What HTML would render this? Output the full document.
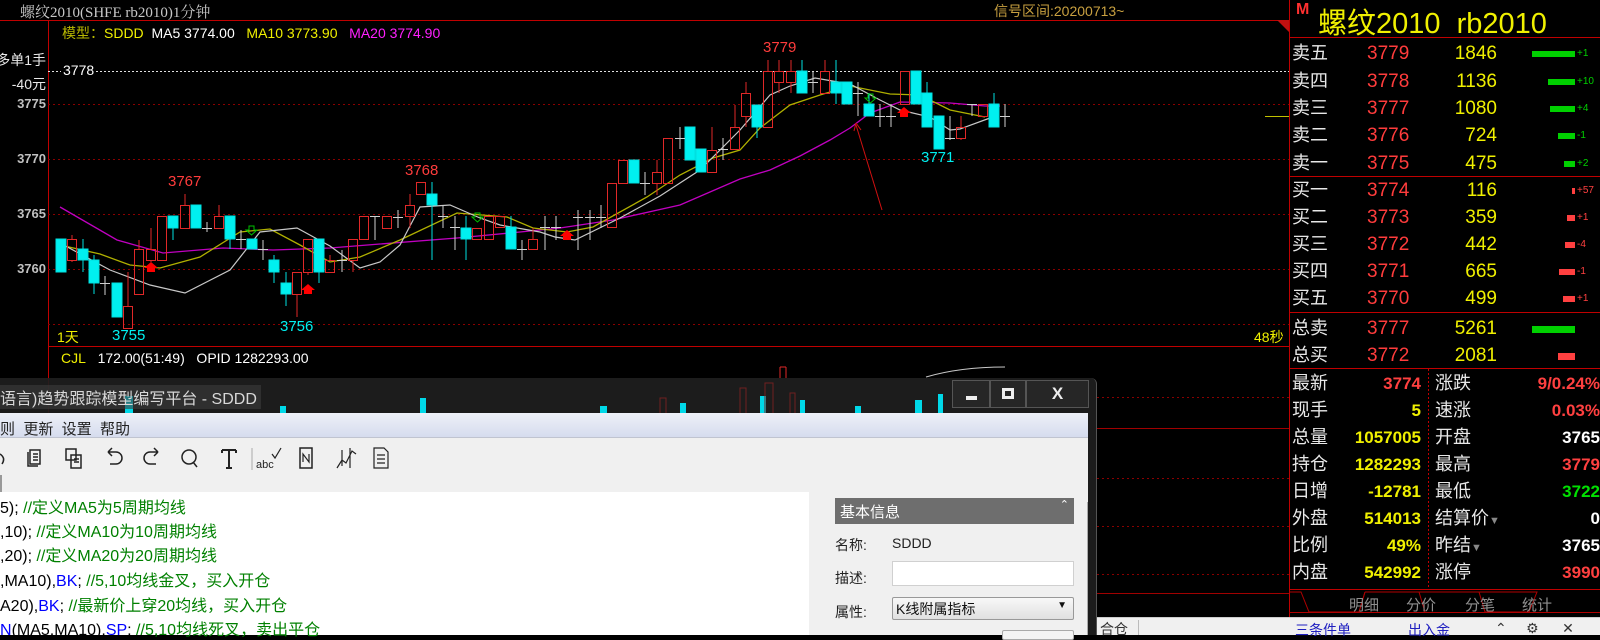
<!DOCTYPE html>
<html><head><meta charset="utf-8"><style>
*{margin:0;padding:0;box-sizing:border-box}
body{width:1600px;height:635px;background:#000;overflow:hidden;position:relative;font-family:"Liberation Sans","Noto Sans CJK SC",sans-serif}
.a{position:absolute;white-space:nowrap}
.ob{position:absolute;left:1289px;width:311px;font-size:18px}
.r{position:absolute;height:27px;width:311px;line-height:27px}
.r .l{position:absolute;left:3px;top:0;color:#e8e8e8;font-size:18px}
.r .p{position:absolute;left:78px;top:0;color:#ff3c3c;font-size:19px}
.r .q{position:absolute;right:103px;top:0;color:#f0f000;font-size:19px}
.r .b{position:absolute;top:11px;height:6px}
.r .d{position:absolute;left:288px;top:0;font-size:10px}
.st{position:absolute;left:1289px;width:311px;height:27px;font-size:17px;font-weight:bold;line-height:27px}
.st .l{position:absolute;left:3px;color:#e8e8e8;font-weight:normal;font-size:18px}
.st .v{position:absolute;right:179px}
.st .l2{position:absolute;left:146px;color:#e8e8e8;font-weight:normal;font-size:18px}
.st .v2{position:absolute;right:0}
.code{position:absolute;left:0;font-size:16px;color:#000;font-family:"Liberation Sans","Noto Sans CJK SC",sans-serif}
.g{color:#008000}.bl{color:#0000ff}
</style></head><body>

<div class="a" style="left:20px;top:1px;color:#c8c8c8;font-size:15px;font-family:'Liberation Serif','Noto Serif CJK SC',serif">螺纹2010(SHFE rb2010)1分钟</div>
<div class="a" style="left:994px;top:1px;color:#c8a040;font-size:14px">信号区间:20200713~</div>

<svg class="a" style="left:0;top:0" width="1600" height="635">
<line x1="0" y1="20.5" x2="1289" y2="20.5" stroke="#c00000"/>
<line x1="48.5" y1="20" x2="48.5" y2="620" stroke="#c00000"/>
<polygon points="1277,20 1289,20 1289,32" fill="#c01010"/>
<line x1="1289.5" y1="0" x2="1289.5" y2="617" stroke="#c00000"/>
<g stroke="#8a0000" stroke-dasharray="2,3">
<line x1="48" y1="104.5" x2="1289" y2="104.5"/><line x1="48" y1="159.5" x2="1289" y2="159.5"/>
<line x1="48" y1="214.5" x2="1289" y2="214.5"/><line x1="48" y1="269.5" x2="1289" y2="269.5"/>
<line x1="48" y1="324.5" x2="1289" y2="324.5"/>
<line x1="1097" y1="397.5" x2="1289" y2="397.5"/><line x1="1097" y1="478.5" x2="1289" y2="478.5"/>
<line x1="1097" y1="526.5" x2="1289" y2="526.5"/><line x1="1097" y1="574.5" x2="1289" y2="574.5"/>
</g>
<line x1="48" y1="71.5" x2="1289" y2="71.5" stroke="#e0e0e0" stroke-dasharray="2,2"/>
<line x1="48" y1="346.5" x2="1289" y2="346.5" stroke="#c00000"/>
<line x1="1097" y1="428.5" x2="1289" y2="428.5" stroke="#a00000"/>
<line x1="1097" y1="593.5" x2="1289" y2="593.5" stroke="#a00000"/>
<line x1="1265" y1="116.5" x2="1289" y2="116.5" stroke="#c0c000"/>

<polyline fill="none" stroke="#c000c0" stroke-width="1.3" points="60,207 117,240 163,253 223,248 273,250 330,248 380,244 457,238 520,232 560,228 613,220 680,205 740,179 770,170 800,156 830,140 850,128 870,113 900,102 950,103 985,106 1000,106"/>
<polyline fill="none" stroke="#b0b000" stroke-width="1.3" points="60,245 100,254 130,265 160,268 200,257 240,232 270,229 300,245 330,262 360,257 400,240 457,213 507,217 533,228 567,232 593,227 647,197 680,175 713,158 740,150 760,128 790,105 820,95 850,86 890,94 920,95 950,110 985,117"/>
<polyline fill="none" stroke="#c8c8c8" stroke-width="1.2" points="60,243 110,270 150,285 185,293 230,270 260,232 297,228 330,246 360,268 380,262 400,245 420,207 450,205 480,218 500,225 540,232 555,237 575,240 620,218 660,196 700,170 740,130 770,95 790,86 815,78 850,84 880,100 900,110 930,117 950,130 960,129 990,118"/>

<g stroke-width="1">
<g fill="#00f0f0" stroke="#00e0e0">
<path d="M61,239V272M83,239V272M94,255V294M117,283V317M173,216V240M196,205V228M230,216V249M252,239V249M274,255V283M286,272V306M319,239V283M432,182V260M466,216V260M511,216V249M634,160V183M690,127V160M701,149V172M757,105V138M802,60V93M836,60V104M847,82V104M869,93V116M916,71V104M927,82V127M939,116V149M994,93V127"/>
<rect x="56" y="239" width="10" height="33"/><rect x="78" y="249" width="10" height="11"/><rect x="89" y="260" width="10" height="23"/>
<rect x="112" y="283" width="10" height="34"/><rect x="168" y="216" width="10" height="12"/><rect x="191" y="205" width="10" height="23"/>
<rect x="225" y="216" width="10" height="23"/><rect x="247" y="239" width="10" height="10"/><rect x="269" y="260" width="10" height="12"/>
<rect x="281" y="283" width="10" height="11"/><rect x="314" y="239" width="10" height="33"/><rect x="427" y="194" width="10" height="11"/>
<rect x="461" y="228" width="10" height="11"/><rect x="506" y="227" width="10" height="22"/><rect x="629" y="160" width="10" height="23"/>
<rect x="685" y="127" width="10" height="33"/><rect x="696" y="149" width="10" height="23"/><rect x="752" y="105" width="10" height="22"/>
<rect x="797" y="71" width="10" height="22"/><rect x="831" y="82" width="10" height="11"/><rect x="842" y="82" width="10" height="22"/>
<rect x="864" y="104" width="10" height="12"/><rect x="911" y="71" width="10" height="33"/><rect x="922" y="93" width="10" height="34"/>
<rect x="934" y="116" width="10" height="33"/><rect x="989" y="104" width="10" height="23"/>
</g>
<g fill="none" stroke="#e02828">
<path d="M72,235V239M72,260V262M128,272V306M139,240V249M151,228V249M151,260V262M185,194V205M219,205V216M297,294V317M308,272V275M330,255V260M353,260V272M410,194V205M410,216V228M533,228V239M657,160V172M657,183V195M712,127V150M735,105V127M746,82V93M746,116V127M768,60V71M779,60V71M779,82V93M791,60V71M791,82V93M825,60V71M961,116V127M961,138V140"/>
<rect x="67.5" y="239.5" width="9" height="21"/><rect x="123.5" y="306.5" width="9" height="22"/><rect x="134.5" y="249.5" width="9" height="45"/>
<rect x="146.5" y="249.5" width="9" height="11"/><rect x="157.5" y="216.5" width="9" height="44"/><rect x="180.5" y="205.5" width="9" height="23"/>
<rect x="214.5" y="216.5" width="9" height="12"/><rect x="292.5" y="272.5" width="9" height="22"/><rect x="303.5" y="239.5" width="9" height="33"/>
<rect x="325.5" y="260.5" width="9" height="12"/><rect x="348.5" y="239.5" width="9" height="21"/><rect x="359.5" y="216.5" width="9" height="23"/>
<rect x="382.5" y="216.5" width="9" height="12"/><rect x="405.5" y="205.5" width="9" height="11"/><rect x="416.5" y="182.5" width="9" height="12"/>
<rect x="472.5" y="228.5" width="9" height="11"/><rect x="484.5" y="216.5" width="9" height="23"/><rect x="495.5" y="216.5" width="9" height="11"/>
<rect x="528.5" y="239.5" width="9" height="10"/><rect x="607.5" y="183.5" width="9" height="44"/><rect x="618.5" y="160.5" width="9" height="23"/>
<rect x="652.5" y="172.5" width="9" height="11"/><rect x="663.5" y="138.5" width="9" height="45"/><rect x="707.5" y="150.5" width="9" height="22"/>
<rect x="730.5" y="127.5" width="9" height="22"/><rect x="741.5" y="93.5" width="9" height="23"/><rect x="763.5" y="71.5" width="9" height="56"/>
<rect x="774.5" y="71.5" width="9" height="11"/><rect x="786.5" y="71.5" width="9" height="11"/><rect x="820.5" y="71.5" width="9" height="22"/>
<rect x="900.5" y="71.5" width="9" height="33"/><rect x="956.5" y="127.5" width="9" height="11"/><rect x="978.5" y="104.5" width="9" height="12"/>
</g>
<g stroke="#d0d0d0">
<path d="M100,283.5H110M105,276V295M202,228.5H212M207,222V232M236,239.5H246M241,230V249M258,249.5H268M263,240V260M337,260.5H347M342,250V272M370,216.5H380M375,216V240M393,217.5H403M398,210V228M438,216.5H448M443,205V228M450,227.5H460M455,216V250M517,249.5H527M522,240V260M540,227.5H550M545,216V250M551,227.5H561M556,216V240M573,217.5H583M578,210V250M585,217.5H595M590,210V240M596,217.5H606M601,205V228M640,183.5H650M645,172V195M675,138.5H685M680,127V149M718,149.5H728M723,138V160M808,82.5H818M813,71V93M853,93.5H863M858,82V116M875,116.5H885M880,104V127M886,116.5H896M891,104V127M945,138.5H955M950,116V140M967,104.5H977M972,104V116M1000,116.5H1010M1005,104V127"/>
</g>
</g>
<g fill="#ff0000"><path d="M147,272h8v-4h3l-7,-6l-7,6h3z"/><path d="M304,294h8v-4h3l-7,-6l-7,6h3z"/><path d="M563,240h8v-4h3l-7,-6l-7,6h3z"/><path d="M900,117h8v-4h3l-7,-6l-7,6h3z"/></g>
<g fill="none" stroke="#00c000"><path d="M249,226h5v4h3l-5.5,5l-5.5,-5h3z"/><path d="M475,213h5v4h3l-5.5,5l-5.5,-5h3z"/><path d="M868,94h5v4h3l-5.5,5l-5.5,-5h3z"/></g>
<line x1="882" y1="210" x2="856" y2="125" stroke="#d01010"/><path d="M856,123l-2,8M856,123l5,7" stroke="#d01010" fill="none"/>
<line x1="780" y1="367" x2="780" y2="378" stroke="#e02828"/><line x1="786" y1="367" x2="786" y2="378" stroke="#e02828"/><line x1="780" y1="367" x2="786" y2="367" stroke="#e02828"/>
<path d="M926,377 Q960,367 1005,367" stroke="#c8c8c8" fill="none"/>
</svg>

<div class="a" style="left:62px;top:23px;font-size:14px"><span style="color:#b8b800">模型：</span><span style="color:#f0f000">SDDD</span>&nbsp;&nbsp;<span style="color:#fff">MA5 3774.00</span>&nbsp;&nbsp;&nbsp;<span style="color:#f0f000">MA10 3773.90</span>&nbsp;&nbsp;&nbsp;<span style="color:#ff20ff">MA20 3774.90</span></div>
<div class="a" style="right:1554px;top:50px;color:#e8e8e8;font-size:14px">多单1手</div>
<div class="a" style="right:1554px;top:74px;color:#e8e8e8;font-size:14px">-40元</div>
<div class="a" style="left:61px;top:62px;color:#fff;font-size:14px;background:#000;padding:0 2px">3778</div>
<div class="a" style="right:1554px;top:96px;color:#c0c0c0;font-size:13px;font-weight:bold">3775</div>
<div class="a" style="right:1554px;top:151px;color:#c0c0c0;font-size:13px;font-weight:bold">3770</div>
<div class="a" style="right:1554px;top:206px;color:#c0c0c0;font-size:13px;font-weight:bold">3765</div>
<div class="a" style="right:1554px;top:261px;color:#c0c0c0;font-size:13px;font-weight:bold">3760</div>
<div class="a" style="left:763px;top:39px;color:#ff3c3c;font-size:15px">3779</div>
<div class="a" style="left:921px;top:149px;color:#00f0f0;font-size:15px">3771</div>
<div class="a" style="left:168px;top:173px;color:#ff3c3c;font-size:15px">3767</div>
<div class="a" style="left:405px;top:162px;color:#ff3c3c;font-size:15px">3768</div>
<div class="a" style="left:112px;top:327px;color:#00f0f0;font-size:15px">3755</div>
<div class="a" style="left:280px;top:318px;color:#00f0f0;font-size:15px">3756</div>
<div class="a" style="left:57px;top:327px;color:#f0f000;font-size:14px">1天</div>
<div class="a" style="left:1254px;top:327px;color:#f0f000;font-size:14px">48秒</div>
<div class="a" style="left:61px;top:350px;font-size:14px"><span style="color:#f0f000">CJL</span>&nbsp;&nbsp;&nbsp;<span style="color:#fff">172.00(51:49)&nbsp;&nbsp;&nbsp;OPID 1282293.00</span></div>

<div class="a" style="left:1296px;top:1px;color:#ff3030;font-size:16px;font-weight:bold">M</div>
<div class="a" style="left:1318px;top:0px;color:#f0f000;font-size:29px">螺纹2010&nbsp;&nbsp;rb2010</div>
<svg class="a" style="left:1289px;top:0" width="311" height="635">
<g stroke="#c00000"><line x1="0" y1="37.5" x2="311" y2="37.5"/><line x1="0" y1="176.5" x2="311" y2="176.5"/><line x1="0" y1="312.5" x2="311" y2="312.5"/><line x1="0" y1="368.5" x2="311" y2="368.5"/><line x1="0" y1="589.5" x2="311" y2="589.5"/></g>
<line x1="139.5" y1="369" x2="139.5" y2="589" stroke="#c00000" stroke-dasharray="2,2"/>
<g fill="none" stroke="#b00000"><path d="M0,592 L12,592 L20,612 L70,612 L76,592"/><path d="M76,592 L70,612 M76,592 L130,592 L136,612 M130,592 L190,592 L196,612 M190,592 L248,592 L240,612 L196,612"/><line x1="0" y1="612.5" x2="311" y2="612.5"/></g>
</svg>
<div class="ob" style="top:40px">
<div class="r" style="top:0"><span class="l">卖五</span><span class="p">3779</span><span class="q">1846</span><span class="b" style="left:243px;width:43px;background:#00d000"></span><span class="d" style="color:#00d000">+1</span></div>
<div class="r" style="top:28px"><span class="l">卖四</span><span class="p">3778</span><span class="q">1136</span><span class="b" style="left:259px;width:27px;background:#00d000"></span><span class="d" style="color:#00d000">+10</span></div>
<div class="r" style="top:55px"><span class="l">卖三</span><span class="p">3777</span><span class="q">1080</span><span class="b" style="left:261px;width:25px;background:#00d000"></span><span class="d" style="color:#00d000">+4</span></div>
<div class="r" style="top:82px"><span class="l">卖二</span><span class="p">3776</span><span class="q">724</span><span class="b" style="left:269px;width:17px;background:#00d000"></span><span class="d" style="color:#00d000">-1</span></div>
<div class="r" style="top:110px"><span class="l">卖一</span><span class="p">3775</span><span class="q">475</span><span class="b" style="left:275px;width:11px;background:#00d000"></span><span class="d" style="color:#00d000">+2</span></div>
<div class="r" style="top:137px"><span class="l">买一</span><span class="p">3774</span><span class="q">116</span><span class="b" style="left:283px;width:3px;background:#ff4040"></span><span class="d" style="color:#ff4040">+57</span></div>
<div class="r" style="top:164px"><span class="l">买二</span><span class="p">3773</span><span class="q">359</span><span class="b" style="left:278px;width:8px;background:#ff4040"></span><span class="d" style="color:#ff4040">+1</span></div>
<div class="r" style="top:191px"><span class="l">买三</span><span class="p">3772</span><span class="q">442</span><span class="b" style="left:276px;width:10px;background:#ff4040"></span><span class="d" style="color:#ff4040">-4</span></div>
<div class="r" style="top:218px"><span class="l">买四</span><span class="p">3771</span><span class="q">665</span><span class="b" style="left:270px;width:16px;background:#ff4040"></span><span class="d" style="color:#ff4040">-1</span></div>
<div class="r" style="top:245px"><span class="l">买五</span><span class="p">3770</span><span class="q">499</span><span class="b" style="left:274px;width:12px;background:#ff4040"></span><span class="d" style="color:#ff4040">+1</span></div>
<div class="r" style="top:275px"><span class="l">总卖</span><span class="p">3777</span><span class="q">5261</span><span class="b" style="left:243px;width:43px;height:7px;background:#00d000"></span></div>
<div class="r" style="top:302px"><span class="l">总买</span><span class="p">3772</span><span class="q">2081</span><span class="b" style="left:269px;width:17px;height:7px;background:#ff4040"></span></div>
</div>
<div class="st" style="top:370px"><span class="l">最新</span><span class="v" style="color:#ff4040">3774</span><span class="l2">涨跌</span><span class="v2" style="color:#ff4040">9/0.24%</span></div>
<div class="st" style="top:397px"><span class="l">现手</span><span class="v" style="color:#f0f000">5</span><span class="l2">速涨</span><span class="v2" style="color:#ff4040">0.03%</span></div>
<div class="st" style="top:424px"><span class="l">总量</span><span class="v" style="color:#f0f000">1057005</span><span class="l2">开盘</span><span class="v2" style="color:#fff">3765</span></div>
<div class="st" style="top:451px"><span class="l">持仓</span><span class="v" style="color:#f0f000">1282293</span><span class="l2">最高</span><span class="v2" style="color:#ff4040">3779</span></div>
<div class="st" style="top:478px"><span class="l">日增</span><span class="v" style="color:#f0f000">-12781</span><span class="l2">最低</span><span class="v2" style="color:#00e000">3722</span></div>
<div class="st" style="top:505px"><span class="l">外盘</span><span class="v" style="color:#f0f000">514013</span><span class="l2">结算价<span style="color:#888;font-size:11px">▼</span></span><span class="v2" style="color:#fff">0</span></div>
<div class="st" style="top:532px"><span class="l">比例</span><span class="v" style="color:#f0f000">49%</span><span class="l2">昨结<span style="color:#888;font-size:11px">▼</span></span><span class="v2" style="color:#fff">3765</span></div>
<div class="st" style="top:559px"><span class="l">内盘</span><span class="v" style="color:#f0f000">542992</span><span class="l2">涨停</span><span class="v2" style="color:#ff4040">3990</span></div>
<div class="a" style="left:1349px;top:594px;color:#909090;font-size:15px">明细</div>
<div class="a" style="left:1406px;top:594px;color:#909090;font-size:15px">分价</div>
<div class="a" style="left:1465px;top:594px;color:#909090;font-size:15px">分笔</div>
<div class="a" style="left:1522px;top:594px;color:#909090;font-size:15px">统计</div>

<div class="a" style="left:1097px;top:617px;width:503px;height:18px;background:#f0f0f0;border-top:1px solid #ccc"></div>
<div class="a" style="left:1138px;top:620px;width:1px;height:15px;background:#bbb"></div>
<div class="a" style="left:1100px;top:619px;color:#333;font-size:14px">合仓</div>
<div class="a" style="left:1295px;top:620px;color:#2020c0;font-size:14px">三条件单</div>
<div class="a" style="left:1408px;top:620px;color:#2020c0;font-size:14px">出入金</div>
<div class="a" style="left:1495px;top:620px;color:#333;font-size:14px">⌃&nbsp;&nbsp;&nbsp;&nbsp;&nbsp;⚙&nbsp;&nbsp;&nbsp;&nbsp;&nbsp;&nbsp;✕</div>

<div class="a" style="left:0;top:378px;width:1097px;height:257px;background:rgba(30,30,30,0.92);border-right:1px solid #555;border-top-right-radius:6px"></div>
<svg class="a" style="left:0;top:378px" width="1090" height="35">
<g fill="#00d8e8"><rect x="125" y="18" width="8" height="17"/><rect x="280" y="28" width="6" height="7"/><rect x="420" y="20" width="6" height="15"/><rect x="600" y="28" width="7" height="7"/><rect x="680" y="25" width="6" height="10"/><rect x="760" y="18" width="6" height="17"/><rect x="800" y="22" width="5" height="13"/><rect x="855" y="28" width="6" height="7"/><rect x="915" y="22" width="7" height="13"/><rect x="938" y="16" width="5" height="19"/></g>
<g fill="none" stroke="#702020"><path d="M740,35V10h6V35M765,35V5h8V35M790,35V15h5V35M660,35V20h6V35"/></g>
</svg>
<div class="a" style="left:0;top:385px;color:#d8d8d8;font-size:16px;background:rgba(60,60,60,0.6);padding:0 4px 0 0">语言)趋势跟踪模型编写平台 - SDDD</div>
<div class="a" style="left:952px;top:380px;width:38px;height:28px;background:#262626;border:1px solid #555"><div style="position:absolute;left:13px;top:15px;width:11px;height:4px;background:#eee"></div></div>
<div class="a" style="left:990px;top:380px;width:36px;height:28px;background:#262626;border:1px solid #555"><div style="position:absolute;left:11px;top:7px;width:12px;height:11px;border:3px solid #eee"></div></div>
<div class="a" style="left:1026px;top:380px;width:63px;height:28px;background:#262626;border:1px solid #555;color:#eee;font-size:17px;font-weight:bold;text-align:center;line-height:26px">X</div>
<div class="a" style="left:0;top:413px;width:1088px;height:25px;background:linear-gradient(#eef0f8,#d6dcee);border-bottom:1px solid #c0c4d0"></div>
<div class="a" style="left:0;top:418px;color:#222;font-size:15px">则 &nbsp;更新 &nbsp;设置 &nbsp;帮助</div>
<div class="a" style="left:0;top:438px;width:1088px;height:54px;background:#f0f0f0"></div>
<svg class="a" style="left:0;top:446px" width="400" height="26" fill="none" stroke="#222" stroke-width="1.5">
<path d="M0,8 Q6,12 2,18"/>
<rect x="30" y="4" width="10" height="14"/><path d="M33,8h5M33,11h5M33,14h5"/><path d="M28,6v14h10"/>
<rect x="66" y="3" width="10" height="11"/><rect x="71" y="9" width="10" height="13"/><path d="M74,13h5M74,16h5"/>
<path d="M108,6h8a6,6 0 0 1 0,12h-6M108,6l4,-4M108,6l4,4"/>
<path d="M158,6h-8a6,6 0 0 0 0,12h6M158,6l-4,-4M158,6l-4,4"/>
<circle cx="189" cy="11" r="7"/><path d="M193,16l4,5"/>
<path d="M222,4h14M229,4v18M222,4v3M236,4v3M226,22h6" stroke-width="2"/>
<line x1="252" y1="2" x2="252" y2="24" stroke="#aaa" stroke-width="1"/>
<path d="M272,8l3,4l6,-10" stroke-width="1.2"/>
<rect x="300" y="2" width="12" height="20"/><path d="M303,16v-8l6,8v-8" stroke-width="1.2"/>
<path d="M337,22l5,-8l4,3l6,-12l4,3M342,4v16M350,2v20" stroke-width="1.2"/>
<path d="M374,2h10l4,4v16h-14z M377,9h8M377,13h8M377,17h8" stroke-width="1.2"/>
</svg>
<div class="a" style="left:256px;top:459px;color:#222;font-size:11px">abc</div>
<div class="a" style="left:0;top:475px;width:2px;height:17px;background:#999"></div>
<div class="a" style="left:0;top:492px;width:809px;height:143px;background:#fff"></div>
<div class="a" style="left:809px;top:492px;width:279px;height:143px;background:#f0f0f0"></div>
<div class="a" style="left:1087px;top:502px;width:1px;height:133px;background:#aaa"></div>
<div class="code" style="top:494px">5); <span class="g">//定义MA5为5周期均线</span></div>
<div class="code" style="top:518px">,10); <span class="g">//定义MA10为10周期均线</span></div>
<div class="code" style="top:542px">,20); <span class="g">//定义MA20为20周期均线</span></div>
<div class="code" style="top:567px">,MA10),<span class="bl">BK</span>; <span class="g">//5,10均线金叉，买入开仓</span></div>
<div class="code" style="top:592px">A20),<span class="bl">BK</span>; <span class="g">//最新价上穿20均线，买入开仓</span></div>
<div class="code" style="top:616px"><span class="bl">N</span>(MA5,MA10),<span class="bl">SP</span>; <span class="g">//5,10均线死叉，卖出平仓</span></div>
<div class="a" style="left:835px;top:498px;width:239px;height:26px;background:#6e6e6e;color:#fff;font-size:15px;padding:3px 5px">基本信息<span style="position:absolute;right:5px;top:0;font-size:11px">⌃</span></div>
<div class="a" style="left:835px;top:535px;color:#222;font-size:14px">名称:</div>
<div class="a" style="left:892px;top:535px;color:#222;font-size:14px">SDDD</div>
<div class="a" style="left:835px;top:568px;color:#222;font-size:14px">描述:</div>
<div class="a" style="left:892px;top:561px;width:182px;height:25px;background:#fff;border:1px solid #d0d0d0"></div>
<div class="a" style="left:835px;top:602px;color:#222;font-size:14px">属性:</div>
<div class="a" style="left:892px;top:597px;width:182px;height:23px;background:linear-gradient(#f8f8f8,#e0e0e0);border:1px solid #999;border-radius:2px;font-size:14px;color:#111;padding:1px 3px">K线附属指标<span style="position:absolute;right:6px;top:2px;font-size:10px">▼</span></div>
<div class="a" style="left:1002px;top:630px;width:72px;height:10px;background:#f4f4f4;border:1px solid #aaa;border-radius:2px"></div>
</body></html>
